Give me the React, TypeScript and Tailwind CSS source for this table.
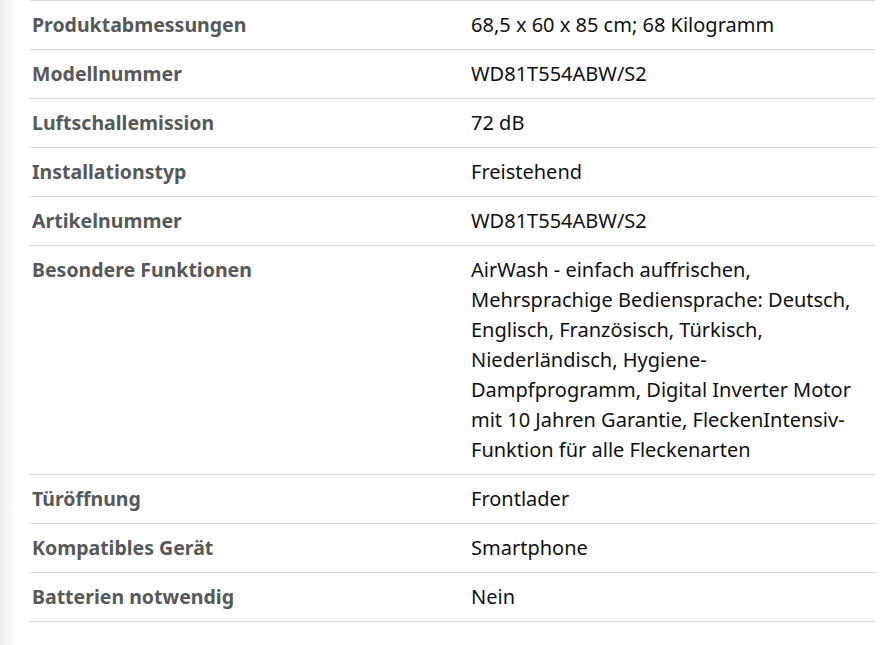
import React from "react";

const rows: { label: string; value: string }[] = [
  { label: "Produktabmessungen", value: "68,5 x 60 x 85 cm; 68 Kilogramm" },
  { label: "Modellnummer", value: "WD81T554ABW/S2" },
  { label: "Luftschallemission", value: "72 dB" },
  { label: "Installationstyp", value: "Freistehend" },
  { label: "Artikelnummer", value: "WD81T554ABW/S2" },
  {
    label: "Besondere Funktionen",
    value:
      "AirWash - einfach auffrischen, Mehrsprachige Bediensprache: Deutsch, Englisch, Französisch, Türkisch, Niederländisch, Hygiene-Dampfprogramm, Digital Inverter Motor mit 10 Jahren Garantie, FleckenIntensiv-Funktion für alle Fleckenarten",
  },
  { label: "Türöffnung", value: "Frontlader" },
  { label: "Kompatibles Gerät", value: "Smartphone" },
  { label: "Batterien notwendig", value: "Nein" },
];

export default function App() {
  return (
    <div className="flex min-h-[645px] w-[882px] bg-white font-['Noto_Sans',sans-serif]">
      {/* soft shade on the left edge */}
      <div className="w-[16px] shrink-0 bg-gradient-to-r from-[#ededed] to-white" />
      <div className="ml-[14px] w-[845px]">
        <table className="w-full border-collapse leading-[30px]">
          <tbody>
            {rows.map((row) => (
              <tr key={row.label} className="border-y border-[#d5d9d9]">
                <td className="w-[441px] py-[9px] pl-[2px] align-top text-[19.5px] font-bold text-[#565959]">
                  {row.label}
                </td>
                <td className="py-[9px] pr-[8px] align-top text-[20px] text-[#0f1111]">{row.value}</td>
              </tr>
            ))}
          </tbody>
        </table>
      </div>
    </div>
  );
}
